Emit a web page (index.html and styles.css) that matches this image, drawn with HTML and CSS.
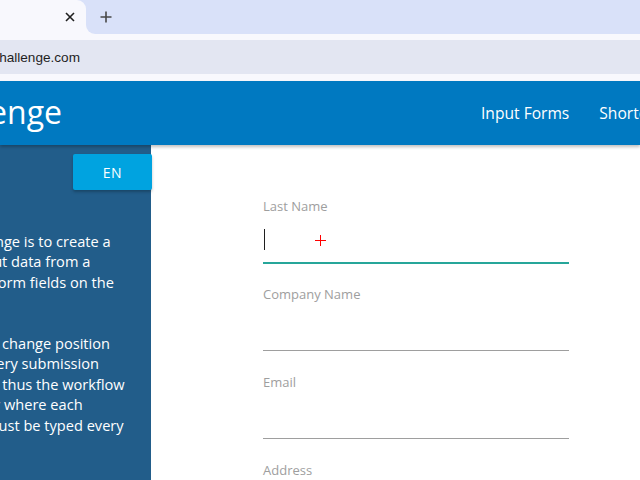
FILE: index.html
```html
<!DOCTYPE html>
<html lang="en">
<head>
<meta charset="utf-8">
<title>Rpa Challenge</title>
<link rel="stylesheet" href="styles.css">
</head>
<body>
<div class="chrome">
  <div class="tabstrip">
    <div class="tabwrap">
      <div class="tab">
        <svg class="tab-close" width="10" height="10" viewBox="0 0 10 10"><path d="M1 1L9 9M9 1L1 9" stroke="#1f1f1f" stroke-width="1.6" fill="none"/></svg>
      </div>
    </div>
    <div class="tabrest">
      <svg class="newtab" width="12" height="12" viewBox="0 0 12 12"><path d="M6 0.5V11.5M0.5 6H11.5" stroke="#474747" stroke-width="1.6" fill="none"/></svg>
    </div>
  </div>
  <div class="toolbar">
    <div class="omnibox"><div class="url">rpachallenge.com</div></div>
  </div>
</div>
<div class="page">
  <header class="header">
    <div class="brand">Rpa Challenge</div>
    <nav class="nav">
      <a class="nav-link">Input Forms</a>
      <a class="nav-link">Shortest Path</a>
      <a class="nav-link">Movie Search</a>
    </nav>
  </header>
  <div class="content">
    <aside class="sidebar">
      <div class="lang"><button class="en-btn">EN</button></div>
      <div class="instructions">
        <p>The goal of this challenge is to create a<br>workflow that will input data from a<br>spreadsheet into the form fields on the<br>screen.</p>
        <p>Beware! The fields will change position<br>on the screen after every submission<br>throughout 10 rounds thus the workflow<br>must correctly identify where each<br>spreadsheet record must be typed every<br>time.</p>
      </div>
    </aside>
    <main class="main">
      <form class="form">
        <div class="field">
          <label class="field-label">Last Name</label>
          <div class="field-input focused"><span class="caret"></span></div>
        </div>
        <div class="field">
          <label class="field-label">Company Name</label>
          <div class="field-input"></div>
        </div>
        <div class="field">
          <label class="field-label">Email</label>
          <div class="field-input"></div>
        </div>
        <div class="field">
          <label class="field-label">Address</label>
          <div class="field-input"></div>
        </div>
      </form>
      <div class="crosshair"></div>
    </main>
  </div>
</div>
</body>
</html>
```
FILE: styles.css
```css
html, body {
  margin: 0;
  padding: 0;
  width: 640px;
  height: 480px;
  overflow: hidden;
  background: #ffffff;
  font-family: "Open Sans", "Liberation Sans", sans-serif;
}

.chrome {
  background: #f8f8fd;
}

.tabstrip {
  display: flex;
  height: 34px;
  background: #f8f8fd;
}

.tabwrap {
  width: 86px;
  background: #d9e1f9;
  flex: none;
}

.tab {
  height: 100%;
  background: #f8f8fd;
  border-top-right-radius: 9px;
  display: flex;
  align-items: center;
  justify-content: flex-end;
  padding-right: 11px;
  box-sizing: border-box;
}

.tab-close {
  display: block;
}

.tabrest {
  flex: 1;
  background: #d9e1f9;
  border-bottom-left-radius: 9px;
  display: flex;
  align-items: center;
  padding-left: 14px;
}

.newtab {
  display: block;
}

.toolbar {
  height: 47px;
  padding-top: 6px;
  box-sizing: border-box;
}

.omnibox {
  height: 34px;
  background: #e3e6f2;
  display: flex;
  align-items: center;
  overflow: hidden;
}

.url {
  flex: none;
  width: 200px;
  margin-left: -120px;
  text-align: right;
  font-family: "Liberation Sans", Arial, sans-serif;
  font-size: 13.6px;
  color: #1f1f1f;
  white-space: nowrap;
}

.page {
  position: relative;
}

.header {
  position: relative;
  z-index: 2;
  height: 64px;
  background: #0079c1;
  display: flex;
  align-items: center;
  box-shadow: 0 2px 3px rgba(0, 0, 0, 0.25);
  overflow: hidden;
}

.brand {
  flex: none;
  width: 300px;
  margin-left: -238px;
  text-align: right;
  color: #ffffff;
  font-size: 32px;
  white-space: nowrap;
  line-height: 1;
  padding-bottom: 2px;
}

.nav {
  display: flex;
  gap: 30px;
  margin-left: 419px;
  white-space: nowrap;
}

.nav-link {
  color: #ffffff;
  font-size: 15.6px;
}

.content {
  display: flex;
  height: 335px;
  overflow: hidden;
}

.sidebar {
  flex: none;
  width: 151px;
  background: #225d8a;
  position: relative;
  z-index: 1;
}

.lang {
  display: flex;
  justify-content: flex-end;
  padding-top: 9px;
  margin-right: -1px;
}

.en-btn {
  width: 79px;
  height: 36px;
  border: none;
  border-radius: 2px;
  background: #00a3e0;
  color: #ffffff;
  font-family: "Open Sans", sans-serif;
  font-size: 14px;
  letter-spacing: 0.5px;
  box-shadow: 0 2px 3px rgba(0, 0, 0, 0.25);
}

.instructions {
  width: 151px;
  overflow: hidden;
  margin-top: 41px;
}

.instructions p {
  margin: 0 0 20.4px 0;
  margin-left: -152px;
  width: 320px;
  white-space: nowrap;
  color: #ffffff;
  font-size: 14.6px;
  line-height: 20.4px;
}

.main {
  flex: 1;
  position: relative;
  padding-left: 112px;
  padding-top: 52px;
}

.form {
  width: 306px;
}

.field {
  margin-bottom: 22px;
}

.field-label {
  display: block;
  height: 19px;
  line-height: 19px;
  font-size: 13px;
  color: #9e9e9e;
}

.field-input {
  height: 46px;
  border-bottom: 1px solid #9e9e9e;
  position: relative;
}

.field-input.focused {
  border-bottom-color: #26a69a;
  box-shadow: 0 1px 0 0 #26a69a;
}

.caret {
  position: absolute;
  left: 1px;
  top: 13px;
  width: 1px;
  height: 21px;
  background: #1f1f1f;
}

.crosshair {
  position: absolute;
  left: 164px;
  top: 90px;
  width: 11px;
  height: 11px;
}

.crosshair::before,
.crosshair::after {
  content: "";
  position: absolute;
  background: #ff0000;
}

.crosshair::before {
  left: 5px;
  top: 0;
  width: 1px;
  height: 11px;
}

.crosshair::after {
  left: 0;
  top: 5px;
  width: 11px;
  height: 1px;
}
```
